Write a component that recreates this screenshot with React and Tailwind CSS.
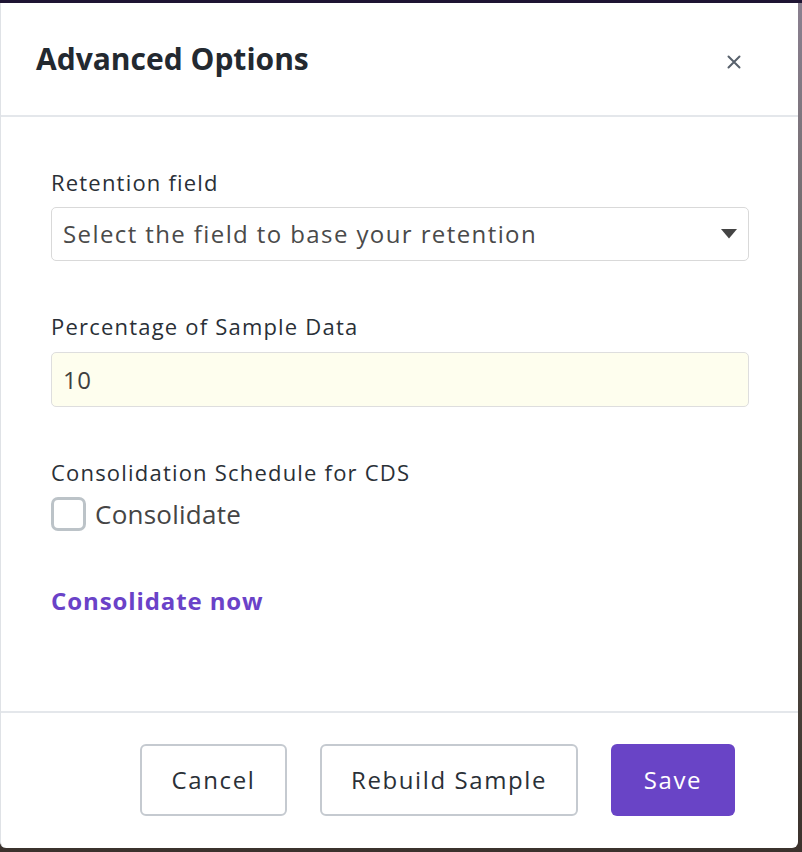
import React from "react";

export default function App() {
  const font = { fontFamily: '"Open Sans", "Noto Sans", sans-serif' };
  return (
    <div
      className="w-full h-[852px] border-t-[3px] border-[#1e1433] pr-[4px] pb-[4px] bg-gradient-to-b from-[#8a8090] via-[#5e5a50] to-[#3b322d]"
      style={font}
    >
      <div className="h-[845px] bg-white rounded-b-[6px] border-l border-[#dfe2e6] flex flex-col">
        {/* Header */}
        <div className="h-[114px] shrink-0 flex items-center justify-between pl-[35px] pr-[56px] border-b-2 border-[#e4e7eb]">
          <h2 className="text-[30px] leading-[36px] font-bold text-[#232930]">
            Advanced Options
          </h2>
          <button className="w-[16px] h-[16px] mt-[5px] flex items-center justify-center">
            <svg width="14" height="14" viewBox="0 0 14 14">
              <path d="M1.5 1.5 L12.5 12.5 M12.5 1.5 L1.5 12.5" stroke="#58616c" strokeWidth="2" strokeLinecap="round" />
            </svg>
          </button>
        </div>

        {/* Body */}
        <div className="flex-1 pl-[50px] pr-[49px] pt-[51px]">
          <label className="block text-[22px] leading-[28px] font-medium text-[#2a3037] tracking-[1.2px]">
            Retention field
          </label>
          <div className="mt-[11px] h-[54px] border border-[#d9d9d9] rounded-[5px] flex items-center justify-between pl-[11px] pr-[11px]">
            <span className="text-[24px] text-[#4a4a4a] tracking-[1.4px]">
              Select the field to base your retention
            </span>
            <svg width="16" height="10" viewBox="0 0 16 10">
              <path d="M0 0 L16 0 L8 9.5 Z" fill="#444444" />
            </svg>
          </div>

          <label className="block mt-[51px] text-[22px] leading-[28px] font-medium text-[#2a3037] tracking-[1.2px]">
            Percentage of Sample Data
          </label>
          <div className="mt-[12px] h-[55px] border border-[#dedede] rounded-[5px] bg-[#fefeee] flex items-center pl-[11px]">
            <span className="text-[24px] text-[#3f3f3f] tracking-[0.5px]">10</span>
          </div>

          <label className="block mt-[51px] text-[22px] leading-[28px] font-medium text-[#2a3037] tracking-[1.2px]">
            Consolidation Schedule for CDS
          </label>
          <div className="mt-[11px] flex items-center gap-[9px]">
            <span className="w-[35px] h-[34px] border-[3px] border-[#bcc3c8] rounded-[7px] bg-white" />
            <span className="text-[26px] leading-[34px] text-[#454545] tracking-[0.25px]">Consolidate</span>
          </div>

          <div className="mt-[55px] text-[24px] leading-[30px] font-bold text-[#6a42c8] tracking-[0.9px]">
            Consolidate now
          </div>
        </div>

        {/* Footer */}
        <div className="shrink-0 border-t-2 border-[#e4e7eb] pt-[31px] pb-[32px] pr-[63px] flex justify-end gap-[33px]">
          <button className="h-[72px] w-[147px] border-2 border-[#c5cad0] rounded-[6px] text-[24px] text-[#2a3037] tracking-[1.6px]">
            Cancel
          </button>
          <button className="h-[72px] w-[258px] border-2 border-[#c5cad0] rounded-[6px] text-[24px] text-[#2a3037] tracking-[1.6px]">
            Rebuild Sample
          </button>
          <button className="h-[72px] w-[124px] rounded-[6px] bg-[#6944c6] text-[24px] text-white tracking-[1.6px]">
            Save
          </button>
        </div>
      </div>
    </div>
  );
}
